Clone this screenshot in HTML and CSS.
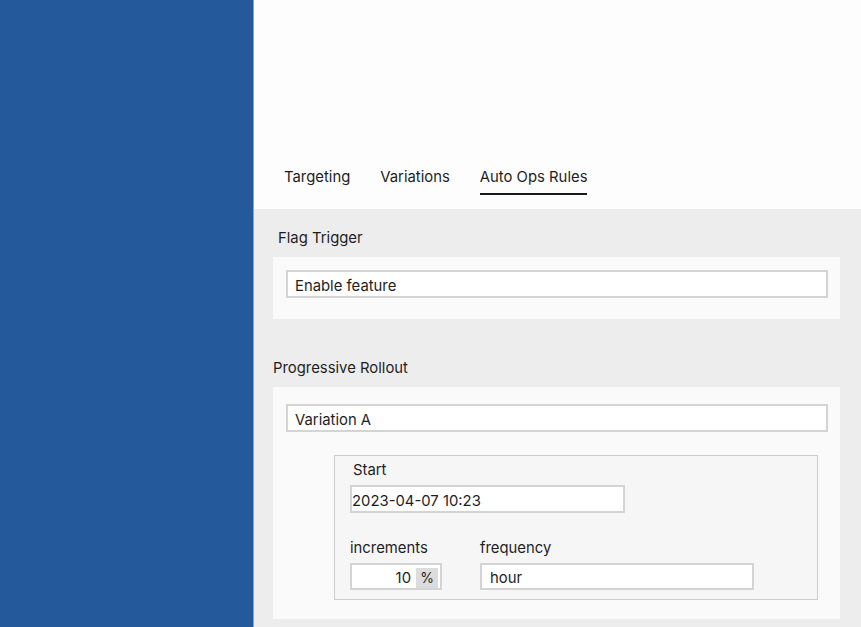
FILE: index.html
```html
<!DOCTYPE html>
<html>
<head>
<meta charset="utf-8">
<link rel="stylesheet" href="styles.css">
</head>
<body>
<div class="app">
  <aside class="sidebar"></aside>
  <main class="main">
    <header class="header">
      <nav class="tabs">
        <div class="tab">Targeting</div>
        <div class="tab">Variations</div>
        <div class="tab active">Auto Ops Rules</div>
      </nav>
    </header>
    <section class="content">
      <div class="label label-trigger">Flag Trigger</div>
      <div class="card card-trigger">
        <div class="input wide">Enable feature</div>
      </div>
      <div class="label label-rollout">Progressive Rollout</div>
      <div class="card card-rollout">
        <div class="input wide">Variation A</div>
        <div class="inner">
          <div class="field-label start-label">Start</div>
          <div class="input date">2023-04-07 10:23</div>
          <div class="row">
            <div class="col">
              <div class="field-label">increments</div>
              <div class="input incr"><span class="num">10</span><span class="unit">%</span></div>
            </div>
            <div class="col">
              <div class="field-label">frequency</div>
              <div class="input freq">hour</div>
            </div>
          </div>
        </div>
      </div>
    </section>
  </main>
</div>
</body>
</html>
```
FILE: styles.css
```css
* { box-sizing: border-box; }
html, body { margin: 0; padding: 0; }
body {
  font-family: Inter, "Noto Sans", sans-serif;
  font-size: 14.85px;
  color: #1e1e1e;
  background: #eeeded;
}
.app {
  display: flex;
  width: 861px;
  height: 627px;
  overflow: hidden;
}
.sidebar {
  width: 254px;
  flex: none;
  background: #245a9b;
  border-right: 1px solid #7da6d8;
}
.main {
  flex: 1;
  display: flex;
  flex-direction: column;
  min-width: 0;
}
.header {
  height: 209px;
  background: #fdfdfd;
  display: flex;
  align-items: flex-end;
  padding: 0 0 14px 30px;
}
.tabs {
  display: flex;
  gap: 30px;
}
.tab {
  line-height: 20px;
  padding-top: 1px;
  padding-bottom: 6px;
  border-bottom: 2px solid transparent;
}
.tab.active {
  border-bottom-color: #1a1a1a;
}
.content {
  flex: 1;
  padding: 19px 21px 0 19px;
  display: flex;
  flex-direction: column;
}
.label {
  line-height: 20px;
}
.label-trigger {
  padding-left: 5px;
  margin-bottom: 9px;
}
.label-rollout {
  margin-top: 39px;
  margin-bottom: 9px;
}
.card {
  background: #fafafa;
  padding: 13px 12px 21px 13px;
}
.card-rollout {
  padding-top: 17px;
  padding-bottom: 19px;
}
.input {
  background: #fff;
  border: 2px solid #d4d4d4;
  height: 28px;
  line-height: 24px;
  padding: 2px 7px 0;
  white-space: nowrap;
}
.inner {
  margin: 23px 10px 0 48px;
  border: 1px solid #cdcdcd;
  background: #f6f6f6;
  padding: 4px 15px 9px 15px;
}
.field-label {
  line-height: 20px;
  margin-bottom: 5px;
}
.start-label {
  padding-left: 3px;
}
.input.date {
  width: 275px;
  padding-left: 0;
}
.row {
  display: flex;
  gap: 38px;
  margin-top: 25px;
}
.input.incr {
  width: 92px;
  height: 27px;
  display: flex;
  justify-content: flex-end;
  align-items: center;
  padding: 2px 2px 0 0;
}
.incr .num {
  margin-right: 5px;
}
.incr .unit {
  background: #dcdcdc;
  width: 22px;
  height: 20px;
  line-height: 20px;
  text-align: center;
  font-size: 14px;
}
.input.freq {
  width: 274px;
  height: 27px;
  line-height: 23px;
  padding-left: 8px;
}
```
